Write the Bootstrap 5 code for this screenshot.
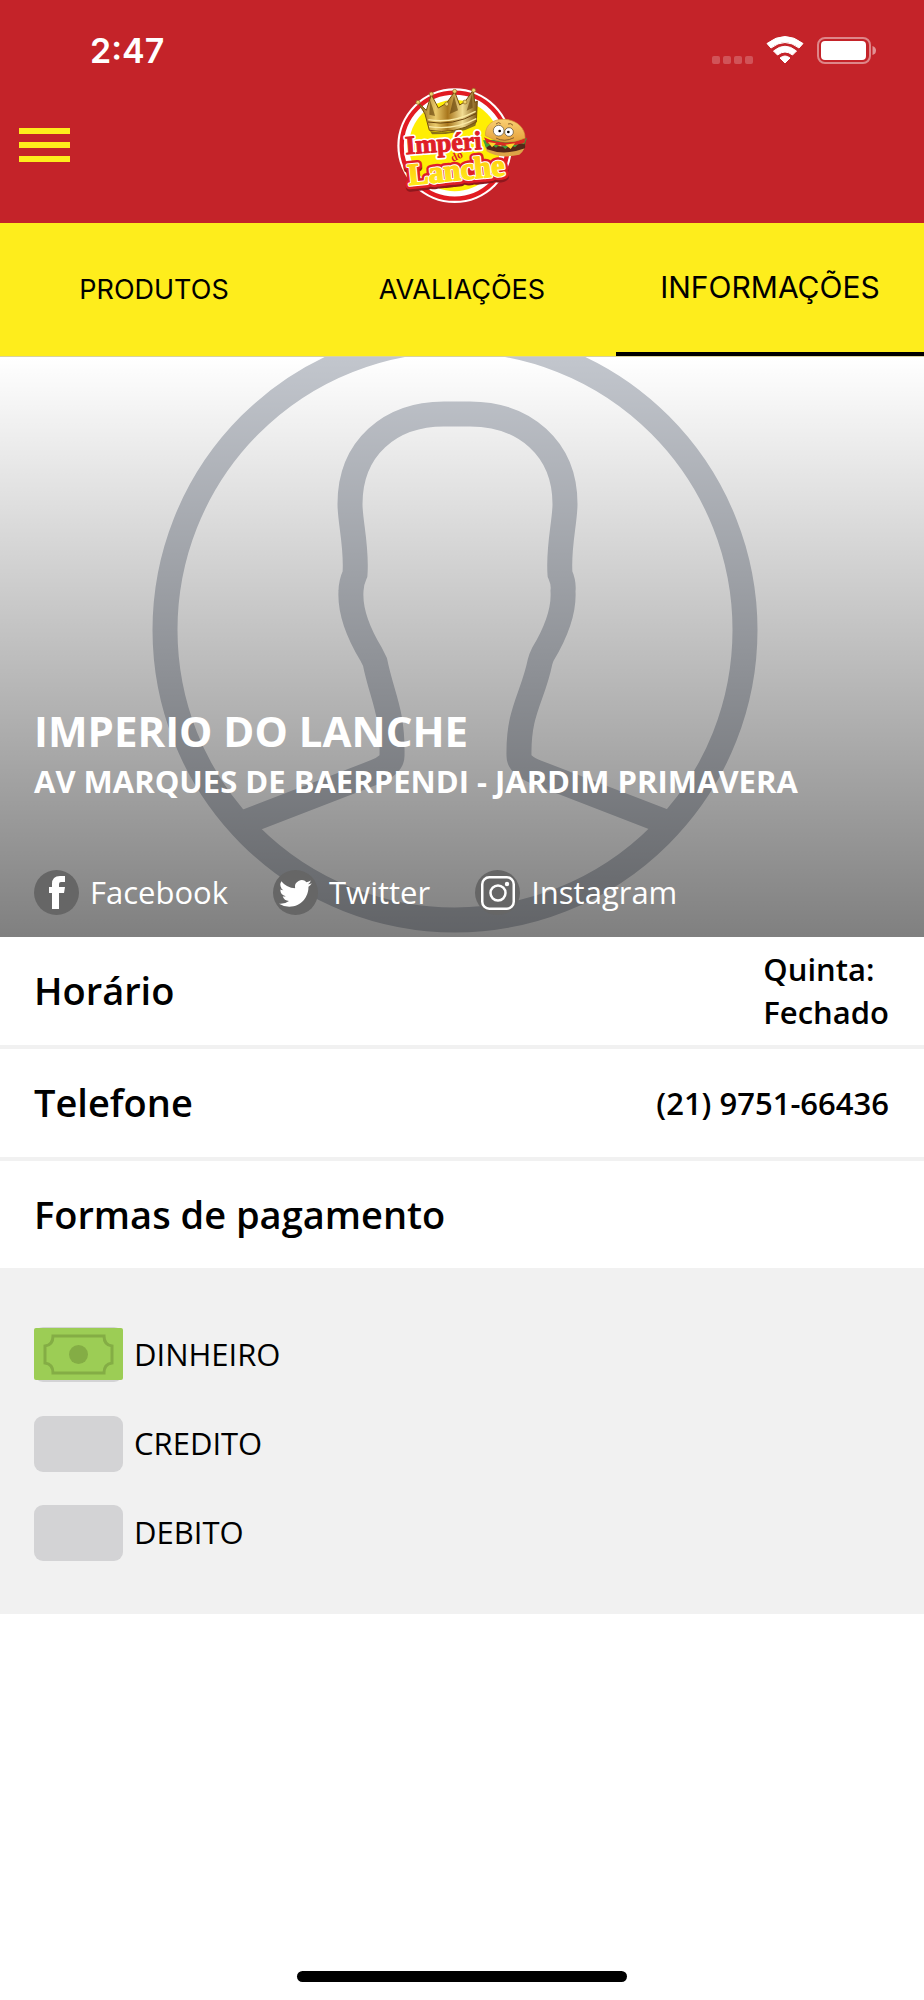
<!DOCTYPE html>
<html lang="pt-BR">
<head>
<meta charset="utf-8">
<meta name="viewport" content="width=device-width, initial-scale=1">
<title>Império do Lanche</title>
<link href="https://cdn.jsdelivr.net/npm/bootstrap@5.3.0/dist/css/bootstrap.min.css" rel="stylesheet">
<style>
  body { font-family: "Open Sans", sans-serif; color: #000; background: #fff; }
  .app-header { background: #c42329; }
  .status-bar { height: 80px; padding: 20px 48px 0 90px; font: 600 34px/62px Inter, sans-serif; }
  .brand-bar { display: grid; grid-template-columns: 1fr auto 1fr; height: 143px; }
  .menu-btn { justify-self: start; align-self: center; margin: 0 0 14px 19px; }
  .tab-strip { height: 134px; background: #feed1c; border-bottom: 1px solid #d9d2a0; font-family: Inter, sans-serif; font-size: 27px; }
  .tab-strip a { color: #000; border-bottom: 4px solid transparent; padding-top: 6px; }
  .tab-strip a.active { font-size: 30px; border-color: #000; padding-top: 0; }
  .hero { height: 580px; padding: 0 34px 22px; background: #fff; }
  .hero-art { inset: 0; }
  .hero h1 { font-size: 42px; line-height: 50px; }
  .hero h2 { font-size: 31px; line-height: 50px; margin-bottom: 63px; }
  .socials { gap: 45px; font-size: 31px; line-height: 46px; }
  .socials a { gap: 11px; }
  .info-row { height: 112px; padding: 0 35px 0 34px; border-bottom: 4px solid #f1f1f1; }
  .info-row:last-child { height: 107px; border: 0; }
  .info-row h3 { font-size: 38px; }
  .info-value { font-size: 31px; line-height: 43px; }
  .payments { background: #f1f1f1; padding: 59px 34px 53px; gap: 33px; font-size: 31px; line-height: 54px; }
  .payments li { gap: 11px; }
  .pay-icon { width: 89px; height: 56px; border-radius: 9px; background: #d3d3d5; }
  svg.pay-icon { border-radius: 0; background: none; }
  .home-bar { width: 330px; height: 11px; margin-bottom: 18px; }
</style>
</head>
<body class="min-vh-100 d-flex flex-column">
<header class="app-header">
  <div class="status-bar d-flex justify-content-between text-white">
    <time>2:47</time>
    <svg width="164" height="60" viewBox="0 0 164 60" fill="#fff" aria-hidden="true">
      <g opacity=".22"><rect y="36" width="8" height="8" rx="2"/><rect x="11" y="36" width="8" height="8" rx="2"/><rect x="22" y="36" width="8" height="8" rx="2"/><rect x="33" y="36" width="8" height="8" rx="2"/></g>
      <path d="M55 23.500Q73 9.500 91 23.500L87 28Q73 17 59 28Z" stroke="#fff" stroke-linejoin="round"/>
      <path d="M61.500 31Q73 21.500 84.500 31L80.500 35Q73 29 65.500 35Z" stroke="#fff" stroke-linejoin="round"/>
      <path d="M68 38Q73 34 78 38L73 43Z" stroke="#fff" stroke-linejoin="round"/>
      <rect x="106" y="18" width="52" height="25" rx="7" fill="none" stroke="#fff" stroke-width="2" opacity=".45"/>
      <rect x="109" y="21" width="45" height="19" rx="4"/>
      <path d="M160.500 26Q164 27 164 30.500T160.500 35Z" opacity=".5"/>
    </svg>
  </div>
  <div class="brand-bar">
    <button class="menu-btn btn border-0 p-0 d-flex" type="button" aria-label="Menu">
      <svg width="51" height="34" viewBox="0 0 51 34" fill="#feed1c"><rect width="51" height="6"/><rect y="14" width="51" height="6"/><rect y="28" width="51" height="6"/></svg>
    </button>
    <svg width="154" height="130" viewBox="4 0 462 390" role="img" aria-label="Império do Lanche">
      <defs>
        <linearGradient id="gold" x2="1"><stop stop-color="#8f6416"/><stop offset=".3" stop-color="#e9c96a"/><stop offset=".5" stop-color="#a8761c"/><stop offset=".75" stop-color="#f1dc92"/><stop offset="1" stop-color="#7d5512"/></linearGradient>
        <linearGradient id="letters" x2="0" y2="1"><stop stop-color="#ffc20c"/><stop offset="1" stop-color="#fff21c"/></linearGradient>
        <linearGradient id="bun" x2="0" y2="1"><stop stop-color="#f9cf72"/><stop offset="1" stop-color="#e6a13b"/></linearGradient>
      </defs>
      <circle cx="213" cy="197" r="172" fill="#fff"/>
      <circle cx="213" cy="197" r="159" fill="#fff" stroke="#e11b22" stroke-width="13"/>
      <circle cx="213" cy="197" r="137" fill="#ffee04"/>
      <path d="M139 153Q205 168 279 123L275 137Q222 164 145 163Z" fill="#8a7018"/>
      <path d="M103 67L128 91 143 44 164 84 189 69 213 35 228 75 244 65 269 30 273 67 281 63 278 126Q213 164 137 151L124 102Z" fill="url(#gold)" stroke="#76500f" stroke-width="3" stroke-linejoin="round"/>
      <path d="M134 119Q204 132 276 94M136 140Q211 152 278 116" fill="none" stroke="#fae9a4" stroke-width="4"/>
      <path d="M133 126Q207 139 277 101" fill="none" stroke="#68420c" stroke-width="3"/>
      <path d="M139 60L147 83 154 108 137 104ZM211 48L223 91 198 102ZM265 43L267 83 249 92Z" fill="#65430d" opacity=".65"/>
      <g fill="#efd26f" stroke="#8b6319" stroke-width="2"><circle cx="103" cy="67" r="6"/><circle cx="143" cy="42" r="6"/><circle cx="189" cy="72" r="6"/><circle cx="213" cy="34" r="6"/><circle cx="244" cy="66" r="6"/><circle cx="270" cy="31" r="6"/></g>
      <g font-family="Liberation Serif, serif" font-weight="700" stroke-linejoin="round">
        <text x="66" y="223" font-size="78" fill="#fff" stroke="#fff" stroke-width="13" transform="rotate(-4 66 223)">Impéri</text>
        <text x="66" y="223" font-size="78" fill="#df1f27" stroke="#df1f27" stroke-width="3" transform="rotate(-4 66 223)">Impéri</text>
        <g transform="rotate(-6 76 316)">
          <text x="76" y="323" font-size="92" fill="#8f171c" stroke="#8f171c" stroke-width="24">Lanche</text>
          <text x="76" y="316" font-size="92" fill="#df1f27" stroke="#df1f27" stroke-width="25">Lanche</text>
          <text x="76" y="316" font-size="92" fill="#fff" stroke="#fff" stroke-width="10">Lanche</text>
          <text x="76" y="316" font-size="92" fill="url(#letters)" stroke="url(#letters)" stroke-width="4">Lanche</text>
        </g>
        <text x="207" y="246" font-size="34" fill="#df1f27" transform="rotate(-25 207 246)">do</text>
      </g>
      <path d="M303 195Q358 220 426 184Q425 213 407 224Q345 238 309 214Z" fill="#dda347"/>
      <path d="M304 191Q360 210 426 183L424 205Q363 228 310 208Z" fill="#552718"/>
      <path d="M298 181L430 175 422 193 407 189 394 202 380 194 365 207 349 193 337 203 323 193 307 203Z" fill="#43a038"/>
      <path d="M301 172Q361 202 426 174L422 189Q360 205 309 190Z" fill="#d92922"/>
      <path d="M313 186L337 190 325 202ZM365 194L394 190 381 207Z" fill="#ffd32b"/>
      <path d="M305 167C304 133 330 116 364 118C399 120 425 144 424 174Q365 201 305 167Z" fill="url(#bun)" stroke="#d59b3b" stroke-width="2"/>
      <circle cx="345" cy="152" r="16" fill="#fff" stroke="#514634" stroke-width="2"/><circle cx="376" cy="156" r="13" fill="#fff" stroke="#514634" stroke-width="2"/>
      <circle cx="348" cy="153" r="4"/><circle cx="374" cy="156" r="4"/>
      <path d="M337 132Q345 124 351 131M373 132Q382 128 388 136M337 174Q362 188 391 173" fill="none" stroke="#8a602b" stroke-width="3"/>
    </svg>
    <span></span>
  </div>
</header>
<nav class="tab-strip" aria-label="Seções">
  <div class="row g-0 h-100 text-center">
    <a class="col-4 d-flex align-items-center justify-content-center text-decoration-none" href="#produtos">PRODUTOS</a>
    <a class="col-4 d-flex align-items-center justify-content-center text-decoration-none" href="#avaliacoes">AVALIAÇÕES</a>
    <a class="active col-4 d-flex align-items-center justify-content-center text-decoration-none" href="#informacoes" aria-current="page">INFORMAÇÕES</a>
  </div>
</nav>
<main id="informacoes">
  <section class="hero position-relative overflow-hidden d-flex flex-column justify-content-end text-white">
    <svg class="hero-art position-absolute w-100 h-100" viewBox="0 0 924 580" preserveAspectRatio="xMidYMid slice" aria-hidden="true">
      <defs><linearGradient id="shade" x2="0" y2="1"><stop stop-opacity="0"/><stop offset="1" stop-opacity=".5"/></linearGradient></defs>
      <g fill="none" stroke="#c2c6cd" stroke-width="25">
        <circle cx="455" cy="273" r="290"/>
        <path d="M243 466L375 415Q392 408 392 399C393 354 382 340 375 305Q372 299 371 297C356 272 350 250 351 234Q351 226 355 217C357 190 350 165 350 147C350 91 390 57 444 57H470C524 57 565 91 565 147C565 165 558 190 560 217Q564 226 563 234C564 250 558 272 543 297Q541 301 540 305C533 340 518 354 519 399Q519 408 536 415L668 466"/>
      </g>
      <rect width="924" height="580" fill="url(#shade)"/>
    </svg>
    <div class="position-relative">
      <h1 class="fw-bold mb-0">IMPERIO DO LANCHE</h1>
      <h2 class="fw-bold">AV MARQUES DE BAERPENDI - JARDIM PRIMAVERA</h2>
      <div class="socials d-flex">
        <a class="d-flex align-items-center text-white text-decoration-none" href="#facebook">
          <svg width="45" height="45" viewBox="0 0 45 45" aria-hidden="true"><circle cx="22.500" cy="22.500" r="22.500" fill="#666"/><path d="M18 39V23H15V17H18V14Q18 6 26 6H31V12H27Q25 12 25 14V17H31L30 23H25V39Z" fill="#fff"/></svg>
          Facebook</a>
        <a class="d-flex align-items-center text-white text-decoration-none" href="#twitter">
          <svg width="45" height="45" viewBox="0 0 45 45" aria-hidden="true"><circle cx="22.500" cy="22.500" r="22.500" fill="#666"/><path transform="translate(6 6) scale(2.050)" fill="#fff" d="M5.026 15c6.038 0 9.341-5.003 9.341-9.334 0-.14 0-.282-.006-.422A6.685 6.685 0 0 0 16 3.542a6.658 6.658 0 0 1-1.889.518 3.301 3.301 0 0 0 1.447-1.817 6.533 6.533 0 0 1-2.087.793A3.286 3.286 0 0 0 7.875 6.030 9.325 9.325 0 0 1 1.108 2.600a3.289 3.289 0 0 0 1.018 4.382A3.323 3.323 0 0 1 .640 6.575v.045a3.288 3.288 0 0 0 2.632 3.218 3.203 3.203 0 0 1-.865.115 3.230 3.230 0 0 1-.614-.057 3.283 3.283 0 0 0 3.067 2.277A6.588 6.588 0 0 1 .780 13.580a6.320 6.320 0 0 1-.780-.045A9.344 9.344 0 0 0 5.026 15Z"/></svg>
          Twitter</a>
        <a class="d-flex align-items-center text-white text-decoration-none" href="#instagram">
          <svg width="45" height="45" viewBox="0 0 45 45" aria-hidden="true"><circle cx="22.500" cy="22.500" r="22.500" fill="#666"/><g fill="none" stroke="#fff" stroke-width="2.500"><rect x="7.250" y="7.250" width="31.500" height="31.500" rx="7"/><circle cx="23" cy="23" r="7.500"/></g><circle cx="32" cy="14" r="2.200" fill="#fff"/></svg>
          Instagram</a>
      </div>
    </div>
  </section>
  <section>
    <div class="info-row d-flex align-items-center justify-content-between">
      <h3 class="fw-semibold mb-0">Horário</h3>
      <div class="info-value fw-semibold">Quinta:<br>Fechado</div>
    </div>
    <div class="info-row d-flex align-items-center justify-content-between">
      <h3 class="fw-semibold mb-0">Telefone</h3>
      <div class="info-value fw-semibold">(21) 9751-66436</div>
    </div>
    <div class="info-row d-flex align-items-center">
      <h3 class="fw-semibold mb-0">Formas de pagamento</h3>
    </div>
  </section>
  <ul class="payments list-unstyled mb-0 d-flex flex-column">
    <li class="d-flex"><svg class="pay-icon" viewBox="0 0 89 56" aria-hidden="true"><rect width="89" height="55" rx="9" fill="#d3d3d5"/><rect y="1" width="89" height="52" rx="2" fill="#9ccd55"/><path d="M19 9H70Q70 18 78 19V36Q70 37 70 46H19Q19 37 11 36V19Q19 18 19 9Z" fill="none" stroke="#84ad45" stroke-width="3"/><circle cx="44.500" cy="27.500" r="9.500" fill="#84ad45"/></svg>DINHEIRO</li>
    <li class="d-flex"><span class="pay-icon"></span>CREDITO</li>
    <li class="d-flex"><span class="pay-icon"></span>DEBITO</li>
  </ul>
</main>
<div class="home-bar mt-auto mx-auto bg-black rounded-pill"></div>
<script src="https://cdn.jsdelivr.net/npm/bootstrap@5.3.0/dist/js/bootstrap.bundle.min.js"></script>
</body>
</html>
